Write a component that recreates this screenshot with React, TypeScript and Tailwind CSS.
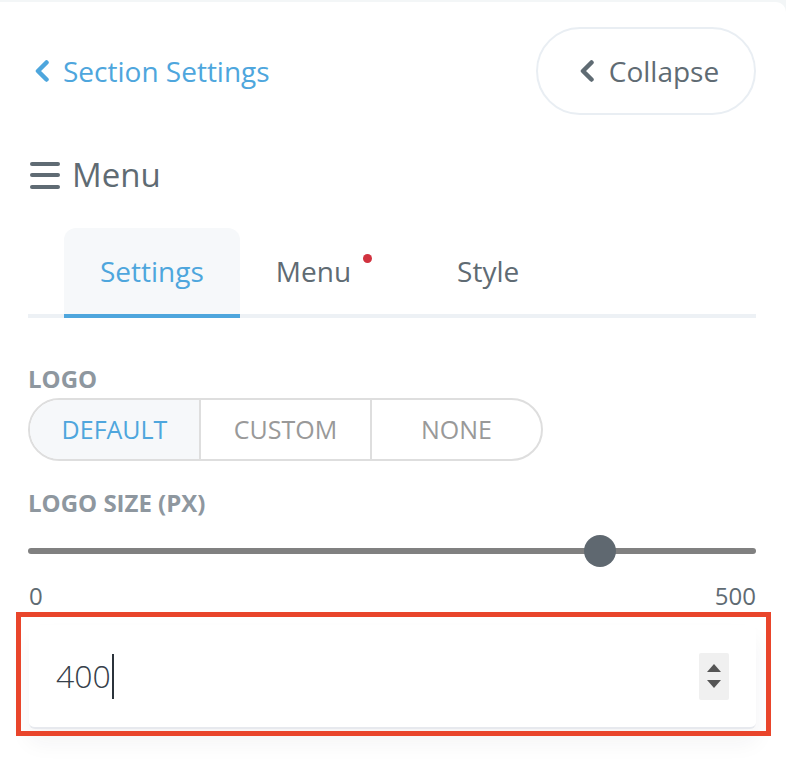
const FONT = "font-['Open_Sans','Liberation_Sans',sans-serif]";

function Chevron({ color }: { color: string }) {
  return (
    <svg width="16" height="22" viewBox="0 0 16 22" fill="none">
      <path d="M12.5 2.5 L4 11 L12.5 19.5" stroke={color} strokeWidth="4.5" strokeLinecap="round" strokeLinejoin="round" />
    </svg>
  );
}

function Tab({ label, active, dot }: { label: string; active?: boolean; dot?: boolean }) {
  return (
    <div
      className={[
        'relative flex h-[90px] items-center pl-9 text-[28px]',
        dot ? 'pr-[70px]' : 'pr-9',
        active
          ? 'rounded-t-[12px] bg-[#f6f8fa] text-[#4ea6dd] border-b-4 border-[#4ea6dd]'
          : 'text-[#5f6b73] border-b-4 border-transparent',
      ].join(' ')}
    >
      <span>{label}</span>
      {dot && <span className="absolute left-[123px] top-[26px] h-[9px] w-[9px] rounded-full bg-[#d1323f]" />}
    </div>
  );
}

export default function App() {
  const segments = ['DEFAULT', 'CUSTOM', 'NONE'];

  return (
    <div className={`${FONT} min-h-[760px] w-[786px] bg-[#f3f6f7] pt-[2px]`}>
      <div className="min-h-[758px] rounded-tr-[10px] bg-white pl-[28px] pr-[30px]">
        {/* top bar */}
        <div className="flex items-center justify-between pt-[25px]">
          <button className="flex items-center gap-[13px] pl-[6px] text-[28px] text-[#4ea6dd]">
            <Chevron color="#4ea6dd" />
            <span>Section Settings</span>
          </button>
          <button className="flex h-[88px] w-[220px] items-center justify-center gap-[14px] rounded-full border-2 border-[#e9eef3] pl-[6px] text-[28px] text-[#5f6b73]">
            <Chevron color="#5f6b73" />
            <span>Collapse</span>
          </button>
        </div>

        {/* heading */}
        <div className="mt-[40px] flex items-center gap-[12px] pl-[2px]">
          <div className="flex w-[30px] flex-col gap-[7.5px]">
            <span className="h-[4px] rounded-full bg-[#5f6b73]" />
            <span className="h-[4px] rounded-full bg-[#5f6b73]" />
            <span className="h-[4px] rounded-full bg-[#5f6b73]" />
          </div>
          <span className="text-[33px] leading-[40px] text-[#5f6b73]">Menu</span>
        </div>

        {/* tabs */}
        <div className="mt-[33px] flex border-b-4 border-[#edf1f5] pl-[36px]">
          <div className="-mb-1 flex">
            <Tab label="Settings" active />
            <Tab label="Menu" dot />
            <Tab label="Style" />
          </div>
        </div>

        {/* logo */}
        <div className="mt-[46px] text-[24px] font-bold leading-[30px] text-[#8e979f]">LOGO</div>
        <div className="mt-[4px] flex h-[63px] w-[515px] overflow-hidden rounded-full border-2 border-[#dedede] text-[25px]">
          {segments.map((s, i) => (
            <div
              key={s}
              className={[
                'flex flex-1 items-center justify-center',
                i > 0 ? 'border-l-2 border-[#dedede]' : '',
                i === 0 ? 'bg-[#f6f8fa] text-[#4ea6dd]' : 'text-[#999999]',
              ].join(' ')}
            >
              {s}
            </div>
          ))}
        </div>

        {/* logo size */}
        <div className="mt-[27px] text-[24px] font-bold leading-[30px] text-[#8e979f]">LOGO SIZE (PX)</div>
        <div className="relative mt-[17px] flex h-[32px] items-center">
          <div className="h-[6px] w-full rounded-full bg-[#808080]" />
          <div className="absolute left-[556px] top-0 h-[32px] w-[32px] rounded-full bg-[#5f6870]" />
        </div>
        <div className="mt-[12px] flex justify-between pl-[1px] text-[24px] leading-[34px] text-[#5f6b73]">
          <span>0</span>
          <span>500</span>
        </div>

        {/* value input */}
        <div className="relative ml-[1px] mt-[12px]">
          <div className="flex h-[104px] items-center rounded-[6px] border-b-2 border-[#e7e9ee] bg-white pl-[27px] pr-[27px] shadow-[0_14px_22px_rgba(30,40,60,0.05)]">
            <span className="text-[32px] font-light text-[#36404a]">400</span>
            <span className="ml-[1px] h-[45px] w-[2px] bg-[#2b333b]" />
            <div className="ml-auto flex h-[47px] w-[30px] flex-col items-center justify-center gap-[8px] rounded-[2px] bg-[#f0f0f0]">
              <svg width="14" height="8" viewBox="0 0 14 8">
                <path d="M7 0 L14 8 L0 8 Z" fill="#555" />
              </svg>
              <svg width="14" height="8" viewBox="0 0 14 8">
                <path d="M0 0 L14 0 L7 8 Z" fill="#555" />
              </svg>
            </div>
          </div>
          <div className="pointer-events-none absolute -bottom-[7px] -left-[13px] -right-[15px] -top-[13px] border-[5px] border-[#e9452b]" />
        </div>
      </div>
    </div>
  );
}
